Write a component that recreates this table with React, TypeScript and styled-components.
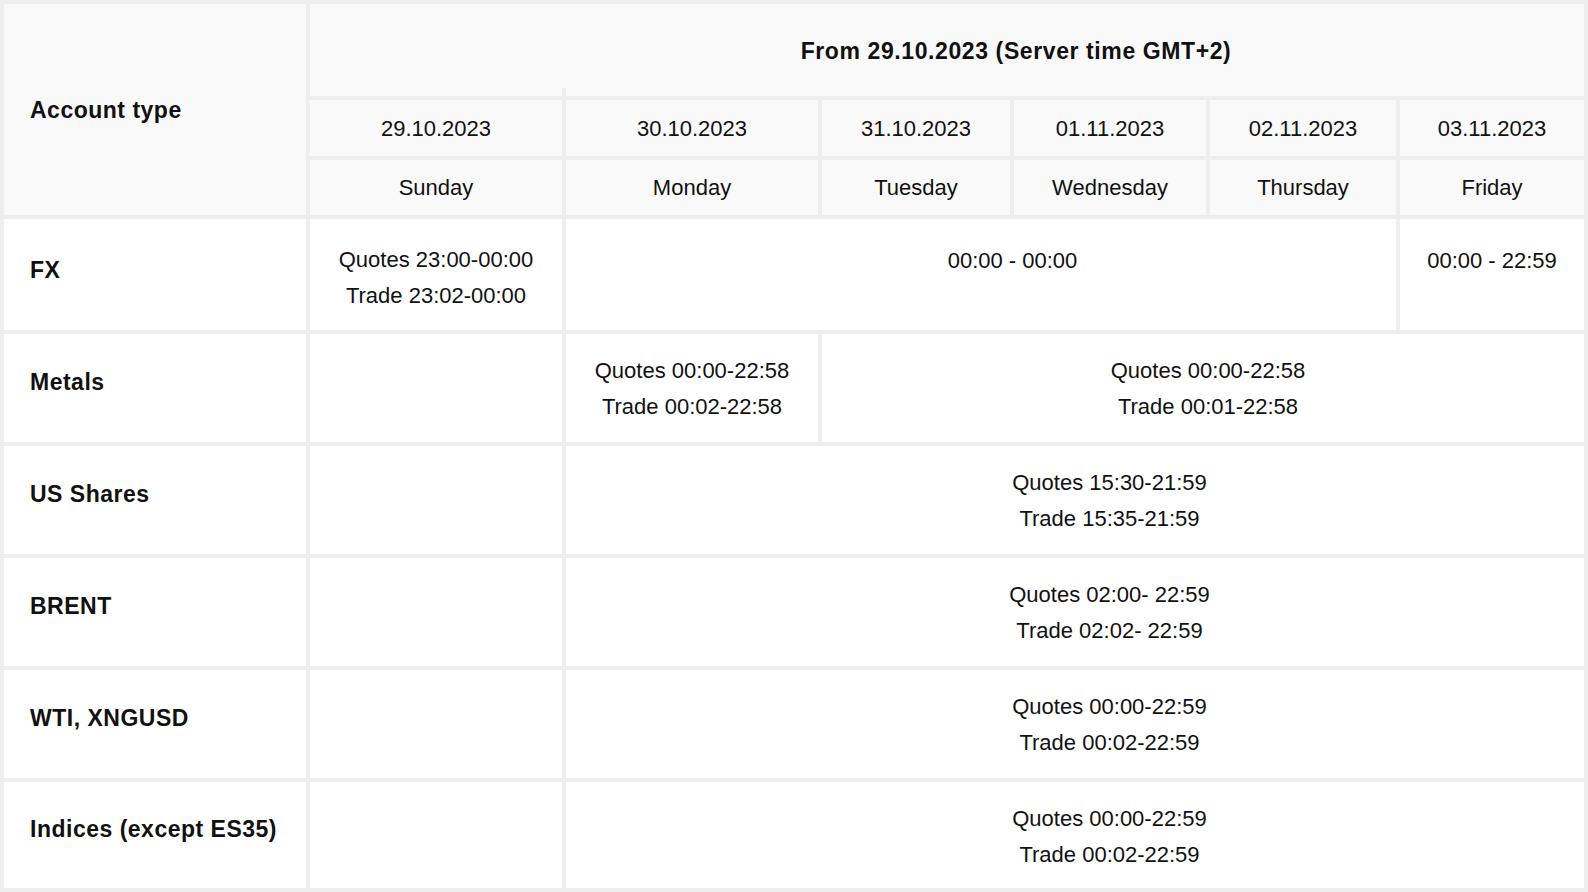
import React from "react";
import styled, { createGlobalStyle } from "styled-components";

const GlobalStyle = createGlobalStyle`
  html, body {
    margin: 0;
    padding: 0;
    background: #eeeeee;
  }
  body {
    font-family: "Liberation Sans", Arial, sans-serif;
    color: #111111;
  }
`;

const ScheduleGrid = styled.div`
  display: grid;
  grid-template-columns: 302px 252px 252px 188px 192px 186px 184px;
  grid-template-rows: 92px 56px 55px 111px 108px 108px 108px 108px 106px;
  gap: 4px;
  padding: 4px;
  width: 1588px;
  height: 892px;
  box-sizing: border-box;
  background: #eeeeee;
`;

const HeadCell = styled.div<{ $col?: string; $row?: string; $left?: boolean; $shift?: number }>`
  grid-column: ${(p) => p.$col || "auto"};
  grid-row: ${(p) => p.$row || "auto"};
  position: relative;
  display: flex;
  align-items: center;
  justify-content: ${(p) => (p.$left ? "flex-start" : "center")};
  padding-left: ${(p) => (p.$left ? 26 : p.$shift ?? 0)}px;
  padding-top: ${(p) => (p.$left ? 0 : 1)}px;
  background: #f9f9f9;
  font-size: 22px;
  line-height: 36px;
`;

const StubHeadCell = styled(HeadCell)`
  &::before {
    content: "";
    position: absolute;
    left: -4px;
    top: -12px;
    width: 4px;
    height: 12px;
    background: #eeeeee;
  }
`;

const Strong = styled.span<{ $wide?: boolean }>`
  font-weight: 700;
  font-size: 23px;
  letter-spacing: ${(p) => (p.$wide ? "0.6px" : "0.5px")};
`;

const RowLabel = styled.div<{ $row: number; $lift?: number }>`
  grid-column: 1;
  grid-row: ${(p) => p.$row};
  display: flex;
  align-items: center;
  padding: 0 0 ${(p) => p.$lift ?? 12}px 26px;
  background: #ffffff;
`;

const BodyCell = styled.div<{ $col: string; $row: number; $top?: number; $shift?: number }>`
  grid-column: ${(p) => p.$col};
  grid-row: ${(p) => p.$row};
  padding-top: ${(p) => p.$top ?? 19}px;
  padding-left: ${(p) => p.$shift ?? 0}px;
  background: #ffffff;
  text-align: center;
  font-size: 22px;
  line-height: 36px;
`;

const dates = ["29.10.2023", "30.10.2023", "31.10.2023", "01.11.2023", "02.11.2023", "03.11.2023"];
const days = ["Sunday", "Monday", "Tuesday", "Wednesday", "Thursday", "Friday"];

type Slot = { col: string; lines: string[]; shift?: number; top?: number };
type Row = { label: string; lift?: number; slots: Slot[] };

const rows: Row[] = [
  {
    label: "FX",
    lift: 9,
    slots: [
      { col: "2", lines: ["Quotes 23:00-00:00", "Trade 23:02-00:00"], top: 23 },
      { col: "3 / 7", lines: ["00:00 - 00:00"], shift: 63, top: 24 },
      { col: "7", lines: ["00:00 - 22:59"], top: 24 },
    ],
  },
  {
    label: "Metals",
    slots: [
      { col: "2", lines: [] },
      { col: "3", lines: ["Quotes 00:00-22:58", "Trade 00:02-22:58"] },
      { col: "4 / 8", lines: ["Quotes 00:00-22:58", "Trade 00:01-22:58"], shift: 10 },
    ],
  },
  {
    label: "US Shares",
    slots: [
      { col: "2", lines: [] },
      { col: "3 / 8", lines: ["Quotes 15:30-21:59", "Trade 15:35-21:59"], shift: 69 },
    ],
  },
  {
    label: "BRENT",
    slots: [
      { col: "2", lines: [] },
      { col: "3 / 8", lines: ["Quotes 02:00- 22:59", "Trade 02:02- 22:59"], shift: 69 },
    ],
  },
  {
    label: "WTI, XNGUSD",
    slots: [
      { col: "2", lines: [] },
      { col: "3 / 8", lines: ["Quotes 00:00-22:59", "Trade 00:02-22:59"], shift: 69 },
    ],
  },
  {
    label: "Indices (except ES35)",
    slots: [
      { col: "2", lines: [] },
      { col: "3 / 8", lines: ["Quotes 00:00-22:59", "Trade 00:02-22:59"], shift: 69 },
    ],
  },
];

export default function App() {
  return (
    <>
      <GlobalStyle />
      <ScheduleGrid>
        <HeadCell $col="1" $row="1 / 4" $left>
          <Strong>Account type</Strong>
        </HeadCell>
        <HeadCell $col="2 / 8" $row="1" $shift={138}>
          <Strong $wide>From 29.10.2023 (Server time GMT+2)</Strong>
        </HeadCell>
        {dates.map((d, i) =>
          i === 1 ? (
            <StubHeadCell key={d} $col={`${i + 2}`} $row="2">
              {d}
            </StubHeadCell>
          ) : (
            <HeadCell key={d} $col={`${i + 2}`} $row="2">
              {d}
            </HeadCell>
          )
        )}
        {days.map((d, i) => (
          <HeadCell key={d} $col={`${i + 2}`} $row="3">
            {d}
          </HeadCell>
        ))}
        {rows.map((r, ri) => (
          <React.Fragment key={r.label}>
            <RowLabel $row={ri + 4} $lift={r.lift}>
              <Strong>{r.label}</Strong>
            </RowLabel>
            {r.slots.map((s) => (
              <BodyCell key={s.col} $col={s.col} $row={ri + 4} $top={s.top} $shift={s.shift}>
                {s.lines.map((l) => (
                  <div key={l}>{l}</div>
                ))}
              </BodyCell>
            ))}
          </React.Fragment>
        ))}
      </ScheduleGrid>
    </>
  );
}
